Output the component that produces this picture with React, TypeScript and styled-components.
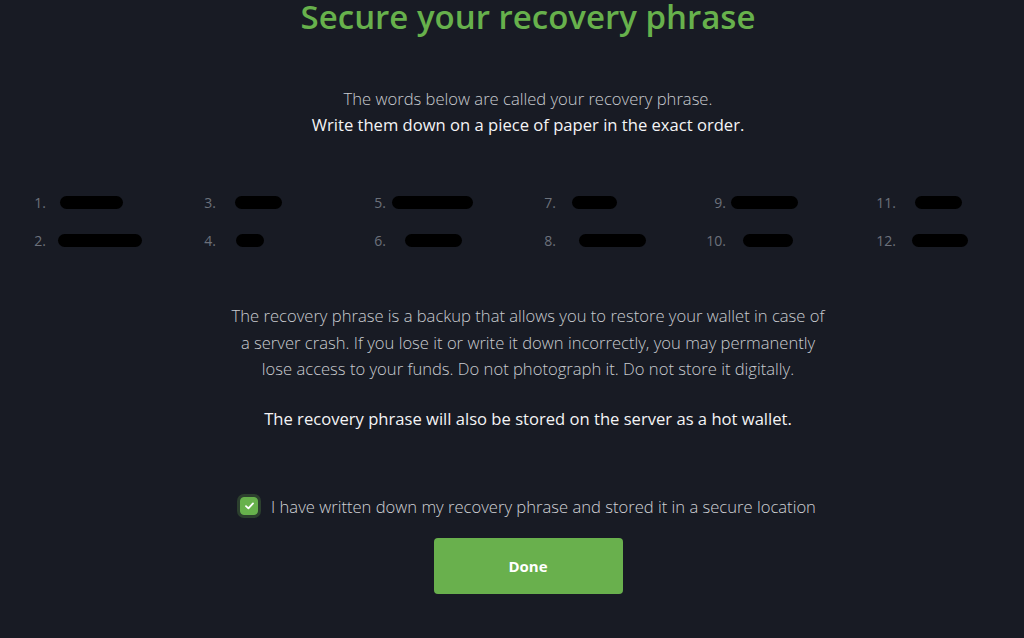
import React, { useState } from "react";
import styled, { createGlobalStyle } from "styled-components";

const GlobalStyle = createGlobalStyle`
  html, body {
    margin: 0;
    padding: 0;
    background: #181b24;
  }
  body {
    font-family: "Open Sans", "Liberation Sans", sans-serif;
    color: #e6e7ea;
  }
`;

const Page = styled.main`
  min-height: 638px;
  padding-left: 32px;
  display: flex;
  flex-direction: column;
  align-items: center;
  overflow: hidden;
`;

const Title = styled.h1`
  margin: 0;
  font-size: 33px;
  line-height: 34px;
  font-weight: 600;
  color: #67b14c;
`;

const Intro = styled.div`
  margin-top: 52px;
  text-align: center;
  font-size: 16.6px;
  line-height: 26px;
`;

const Text = styled.p<{ $strong?: boolean }>`
  margin: 0;
  font-weight: ${(p) => (p.$strong ? 400 : 300)};
  color: ${(p) => (p.$strong ? "#f4f4f5" : "#c9cbd0")};
`;

const WordGrid = styled.ol`
  list-style: none;
  margin: 45px 0 0;
  padding: 0;
  width: 1020px;
  flex-shrink: 0;
  display: grid;
  grid-template-columns: repeat(6, 170px);
  grid-auto-flow: column;
  grid-template-rows: repeat(2, 38px);
`;

const WordItem = styled.li`
  display: flex;
  align-items: center;
  font-size: 14px;
  color: #6c717b;
`;

const Index = styled.span`
  width: 28px;
  text-align: right;
  font-weight: 400;
`;

const Redacted = styled.span<{ $offset: number; $width: number }>`
  display: inline-block;
  margin-left: ${(p) => p.$offset}px;
  width: ${(p) => p.$width}px;
  height: 13px;
  border-radius: 7px;
  background: #000;
`;

const Notice = styled.div`
  margin-top: 44px;
  max-width: 598px;
  text-align: center;
  font-size: 16.6px;
  line-height: 26.5px;
`;

const HotWallet = styled.p`
  margin: 24px 0 0;
  text-align: center;
  font-size: 16.6px;
  font-weight: 400;
  color: #f4f4f5;
`;

const Confirm = styled.label`
  margin-top: 65px;
  display: flex;
  align-items: center;
  gap: 13px;
  font-size: 16.6px;
  font-weight: 300;
  color: #d0d2d6;
  cursor: pointer;
`;

const Box = styled.span<{ $checked: boolean }>`
  width: 16px;
  height: 16px;
  border-radius: 4px;
  display: flex;
  align-items: center;
  justify-content: center;
  background: ${(p) => (p.$checked ? "#67b14c" : "transparent")};
  border: 1px solid #67b14c;
  box-shadow: 0 0 0 3px rgba(103, 177, 76, 0.25);
`;

const HiddenInput = styled.input`
  display: none;
`;

const DoneButton = styled.button`
  margin-top: 20px;
  width: 189px;
  height: 56px;
  border: none;
  border-radius: 4px;
  background: #69b04d;
  color: #fff;
  font: inherit;
  font-size: 15px;
  font-weight: 700;
  cursor: pointer;
`;

const words: { offset: number; width: number }[] = [
  { offset: 14, width: 63 },
  { offset: 12, width: 84 },
  { offset: 19, width: 47 },
  { offset: 20, width: 28 },
  { offset: 6, width: 81 },
  { offset: 19, width: 57 },
  { offset: 16, width: 45 },
  { offset: 23, width: 67 },
  { offset: 5, width: 67 },
  { offset: 17, width: 50 },
  { offset: 19, width: 47 },
  { offset: 16, width: 56 },
];

const App = () => {
  const [checked, setChecked] = useState(true);

  return (
    <Page>
      <GlobalStyle />
      <Title>Secure your recovery phrase</Title>
      <Intro>
        <Text>The words below are called your recovery phrase.</Text>
        <Text $strong>Write them down on a piece of paper in the exact order.</Text>
      </Intro>
      <WordGrid>
        {words.map((w, i) => (
          <WordItem key={i}>
            <Index>{i + 1}.</Index>
            <Redacted $offset={w.offset} $width={w.width} />
          </WordItem>
        ))}
      </WordGrid>
      <Notice>
        <Text>
          The recovery phrase is a backup that allows you to restore your wallet in case of a
          server crash. If you lose it or write it down incorrectly, you may permanently lose
          access to your funds. Do not photograph it. Do not store it digitally.
        </Text>
      </Notice>
      <HotWallet>The recovery phrase will also be stored on the server as a hot wallet.</HotWallet>
      <Confirm>
        <HiddenInput type="checkbox" checked={checked} onChange={() => setChecked(!checked)} />
        <Box $checked={checked}>
          {checked && (
            <svg width="9" height="8" viewBox="0 0 9 8">
              <path d="M1 4.2 L3.4 6.4 L8 1.4" fill="none" stroke="#fff" strokeWidth="1.8" strokeLinecap="round" strokeLinejoin="round" />
            </svg>
          )}
        </Box>
        I have written down my recovery phrase and stored it in a secure location
      </Confirm>
      <DoneButton>Done</DoneButton>
    </Page>
  );
};

export default App;
